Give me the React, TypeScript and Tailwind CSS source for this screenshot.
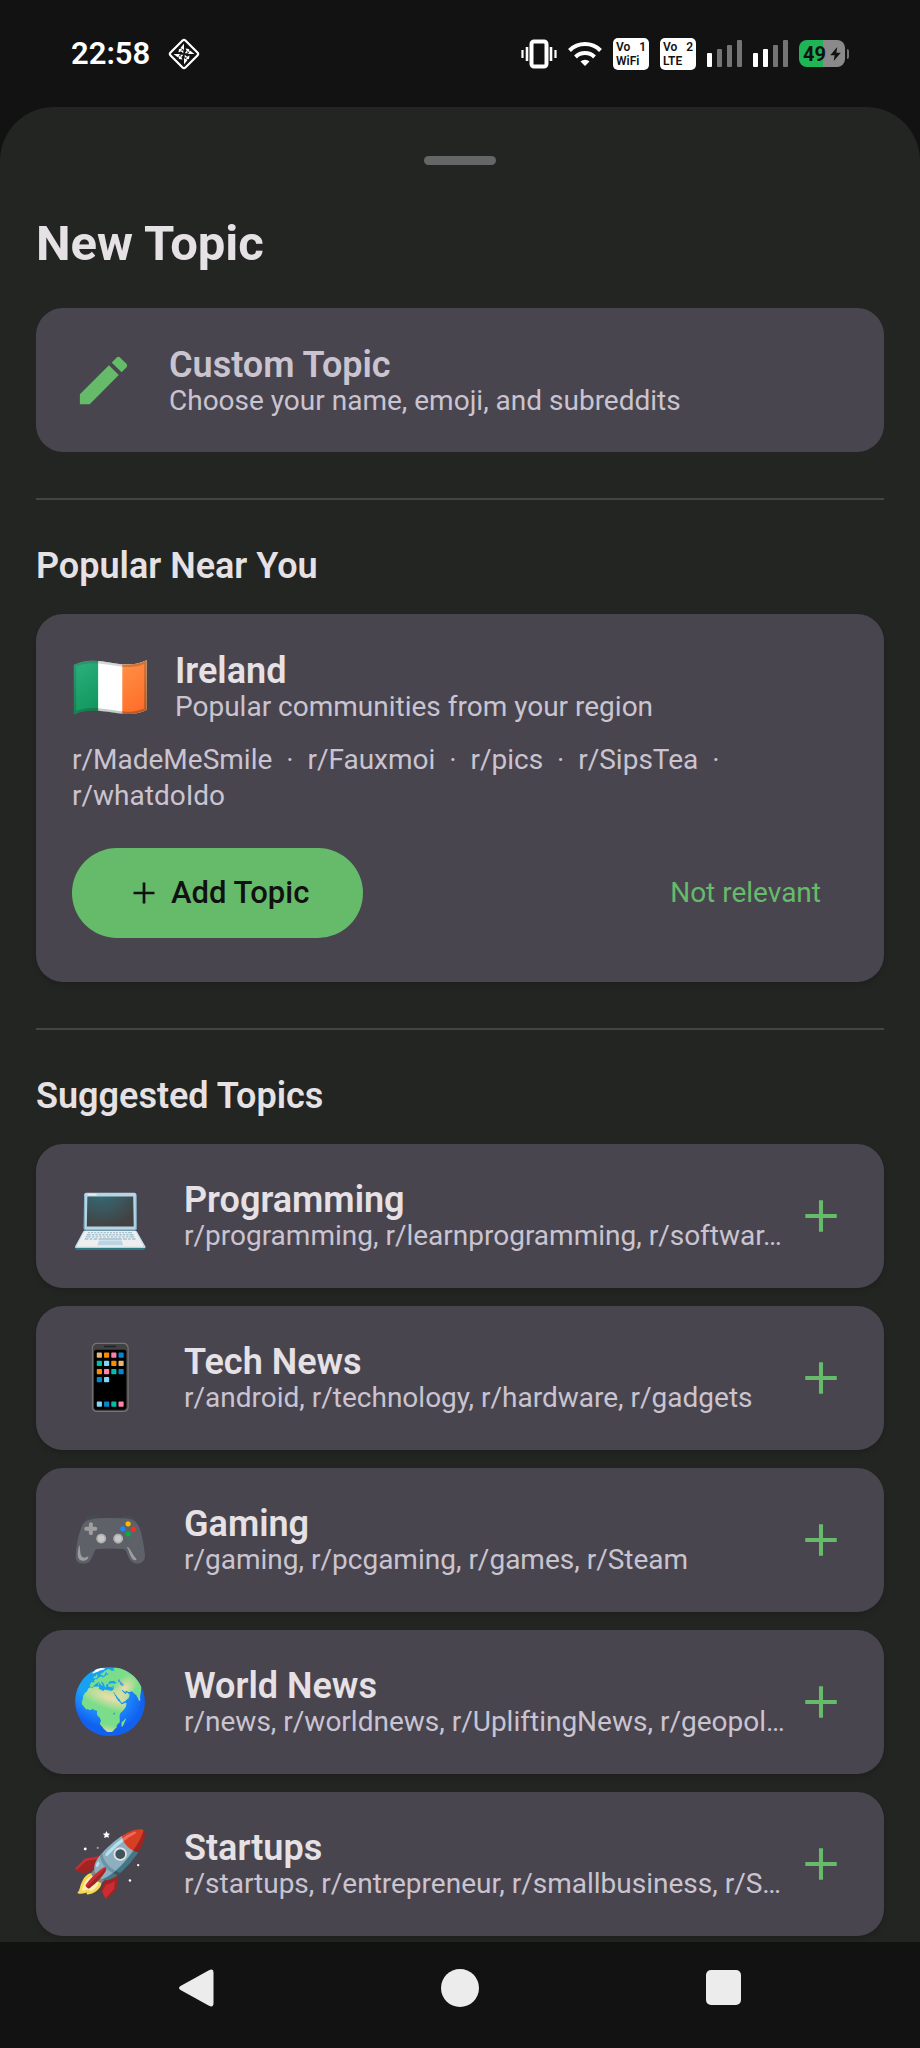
import React from 'react';

const suggestedTopics = [
  { emoji: '💻', name: 'Programming', subs: 'r/programming, r/learnprogramming, r/softwar…' },
  { emoji: '📱', name: 'Tech News', subs: 'r/android, r/technology, r/hardware, r/gadgets' },
  { emoji: '🎮', name: 'Gaming', subs: 'r/gaming, r/pcgaming, r/games, r/Steam' },
  { emoji: '🌍', name: 'World News', subs: 'r/news, r/worldnews, r/UpliftingNews, r/geopol…' },
  { emoji: '🚀', name: 'Startups', subs: 'r/startups, r/entrepreneur, r/smallbusiness, r/S…' },
];

const AddIcon = ({ className }: { className: string }) => (
  <svg viewBox="0 0 24 24" fill="currentColor" className={className} aria-hidden="true">
    <path d="M19 12.9h-6.100V19h-1.800v-6.100H5v-1.800h6.100V5h1.800v6.100H19z" />
  </svg>
);

const VolteBadge = ({ sim, label }: { sim: string; label: string }) => (
  <div className="flex h-8 w-9 flex-col justify-center rounded-[5px] bg-white px-[3px] text-[12px] leading-[14px] font-semibold text-[#111]">
    <div className="flex justify-between">
      <span>Vo</span>
      <span>{sim}</span>
    </div>
    <span>{label}</span>
  </div>
);

const Signal = ({ level }: { level: number }) => (
  <svg viewBox="0 0 35 27" className="h-[27px] w-[35px]" aria-hidden="true">
    {[14, 18, 22, 27].map((h, i) => (
      <rect key={h} x={i * 10} y={27 - h} width="5" height={h} rx="1" fill={i < level ? '#fff' : '#747474'} />
    ))}
  </svg>
);

const StatusBar = () => (
  <header className="flex h-[107px] items-center justify-between px-[71px] text-white">
    <div className="flex items-center gap-[18px]">
      <span className="text-[31px] leading-9 font-semibold">22:58</span>
      <svg viewBox="0 0 32 32" className="size-8" fill="none" aria-hidden="true">
        <rect x="5.5" y="5.5" width="21" height="21" rx="2" transform="rotate(45 16 16)" stroke="#fff" strokeWidth="2.2" />
        {/* Pinwheel: one blade and two petals per quarter turn */}
        {[0, 90, 180, 270].map((angle) => (
          <g key={angle} transform={`rotate(${angle} 16 16)`} fill="#fff">
            <path d="M16 5.500v6.500l-3.500-2z" />
            <path d="M17.500 10.500l3.500.5.5 3-2.500-.5z" />
            <path d="M15.300 15.300v-3l-2.500 1z" />
          </g>
        ))}
      </svg>
    </div>
    <div className="flex items-center gap-[11px]">
      <svg viewBox="0 0 36 30" className="h-[30px] w-9" fill="none" stroke="#fff" aria-hidden="true">
        <rect x="10.500" y="2.500" width="15" height="25" rx="2.500" strokeWidth="4" />
        <path d="M6 8v14M30 8v14" strokeWidth="2.600" />
        <path d="M1.500 11v8M34.500 11v8" strokeWidth="2.200" />
      </svg>
      <svg viewBox="0 0 34 26" className="h-[26px] w-[34px]" fill="none" stroke="#fff" strokeWidth="4" aria-hidden="true">
        <path d="M1.500 9.500a22 22 0 0 1 31 0M7.500 16a13.500 13.500 0 0 1 19 0" />
        <path d="M12.500 20.500a6.500 6.500 0 0 1 9 0L17 25z" fill="#fff" stroke="none" />
      </svg>
      <VolteBadge sim="1" label="WiFi" />
      <VolteBadge sim="2" label="LTE" />
      <Signal level={1} />
      <Signal level={2} />
      <div className="flex items-center gap-[2px]">
        <div className="flex h-[27px] w-[46px] items-center justify-center rounded-lg bg-linear-to-r from-[#1fb556] from-52% to-[#8a8a8a] to-52% text-[20px] leading-6 font-bold text-[#111]">
          <span>49</span>
          <svg viewBox="0 0 12 16" className="ml-1 h-[14px] w-[11px]" fill="currentColor" aria-hidden="true">
            <path d="M8 0 0 9.500h5L4 16l8-9.500H7z" />
          </svg>
        </div>
        <div className="h-[10px] w-[2px] rounded-r bg-[#747474]" />
      </div>
    </div>
  </header>
);

export default function App() {
  return (
    <div className="flex min-h-screen flex-col bg-[#121212] font-[Roboto,sans-serif] text-[#e6e1e5]">
      <StatusBar />

      <main className="flex-1 rounded-t-[54px] bg-[#222522] px-9 pb-[6px]">
        {/* Drag handle */}
        <div className="flex justify-center pt-[49px] pb-[47px]">
          <div className="h-[9px] w-[72px] rounded-full bg-[#656667]" />
        </div>

        <h1 className="text-[49px] leading-[64px] font-bold">New Topic</h1>

        <button className="mt-8 flex min-h-36 w-full items-center gap-[34px] rounded-[27px] bg-[#49454f] px-9 text-left text-[#cac4d0]">
          <svg viewBox="0 0 24 24" className="size-[63px] shrink-0 text-[#66bb6a]" fill="currentColor" aria-hidden="true">
            <path d="M3 17.250V21h3.750L17.810 9.940l-3.750-3.750L3 17.250zM20.710 7.040c.39-.39.39-1.020 0-1.410l-2.340-2.340c-.39-.39-1.020-.39-1.410 0l-1.830 1.830 3.750 3.750 1.830-1.830z" />
          </svg>
          <span className="flex min-w-0 flex-col pt-1.5">
            <span className="text-[36px] leading-9 font-semibold">Custom Topic</span>
            <span className="text-[28px] leading-9">Choose your name, emoji, and subreddits</span>
          </span>
        </button>

        <hr className="mt-[46px] border-t-2 border-[#454547]" />

        {/* Popular near you */}
        <section className="mt-12">
          <h2 className="text-[36px] leading-9 font-semibold">Popular Near You</h2>
          <div className="mt-[30px] rounded-[27px] bg-[#49454f] px-9 pt-9 pb-11 shadow-md">
            <div className="flex items-center gap-[27px]">
              <span className="flex w-[76px] shrink-0 justify-center text-[63px] leading-[72px]">🇮🇪</span>
              <div className="pt-[3px]">
                <h3 className="text-[36px] leading-9 font-semibold">Ireland</h3>
                <p className="text-[28px] leading-9 text-[#cac4d0]">Popular communities from your region</p>
              </div>
            </div>
            <p className="mt-[17px] text-[28px] leading-9 whitespace-pre-wrap text-[#cac4d0]">
              {'r/MadeMeSmile  ·  r/Fauxmoi  ·  r/pics  ·  r/SipsTea  ·  r/whatdoIdo'}
            </p>
            <div className="mt-[34px] flex items-center justify-between">
              <button className="flex h-[90px] items-center gap-[9px] rounded-full bg-[#66bb6a] px-[54px] text-[31px] font-medium text-[#111]">
                <AddIcon className="size-9" />
                Add Topic
              </button>
              <button className="px-[27px] text-[28px] leading-9 text-[#66bb6a]">Not relevant</button>
            </div>
          </div>
        </section>

        <hr className="mt-[46px] border-t-2 border-[#454547]" />

        {/* Suggested topics */}
        <section className="mt-12">
          <h2 className="text-[36px] leading-9 font-semibold">Suggested Topics</h2>
          <ul className="mt-[30px] flex flex-col gap-[18px]">
            {suggestedTopics.map((topic) => (
              <li key={topic.name} className="flex min-h-36 items-center rounded-[27px] bg-[#49454f] px-9 shadow-md">
                <span className="flex w-[76px] shrink-0 justify-center text-[63px] leading-[72px]">{topic.emoji}</span>
                <div className="ml-9 min-w-0 flex-1 pt-1">
                  <h3 className="text-[36px] leading-9 font-semibold">{topic.name}</h3>
                  <p className="text-[28px] leading-9 text-[#cac4d0]">{topic.subs}</p>
                </div>
                <button aria-label={`Add ${topic.name}`} className="shrink-0 text-[#66bb6a]">
                  <AddIcon className="size-[54px]" />
                </button>
              </li>
            ))}
          </ul>
        </section>
      </main>

      <nav className="flex h-[107px] items-center justify-around px-[66px] pb-4 text-[#ececec]">
        <button aria-label="Back">
          <svg viewBox="0 0 36 38" className="h-[38px] w-9" fill="currentColor" aria-hidden="true">
            <path d="M1.500 17 30 1.200Q34.500-1 34.500 4v30q0 5-4.500 2.800L1.500 21q-3-2 0-4z" />
          </svg>
        </button>
        <button aria-label="Home" className="size-[38px] rounded-full bg-[#ececec]" />
        <button aria-label="Recent apps" className="size-[35px] rounded-[5px] bg-[#ececec]" />
      </nav>
    </div>
  );
}
